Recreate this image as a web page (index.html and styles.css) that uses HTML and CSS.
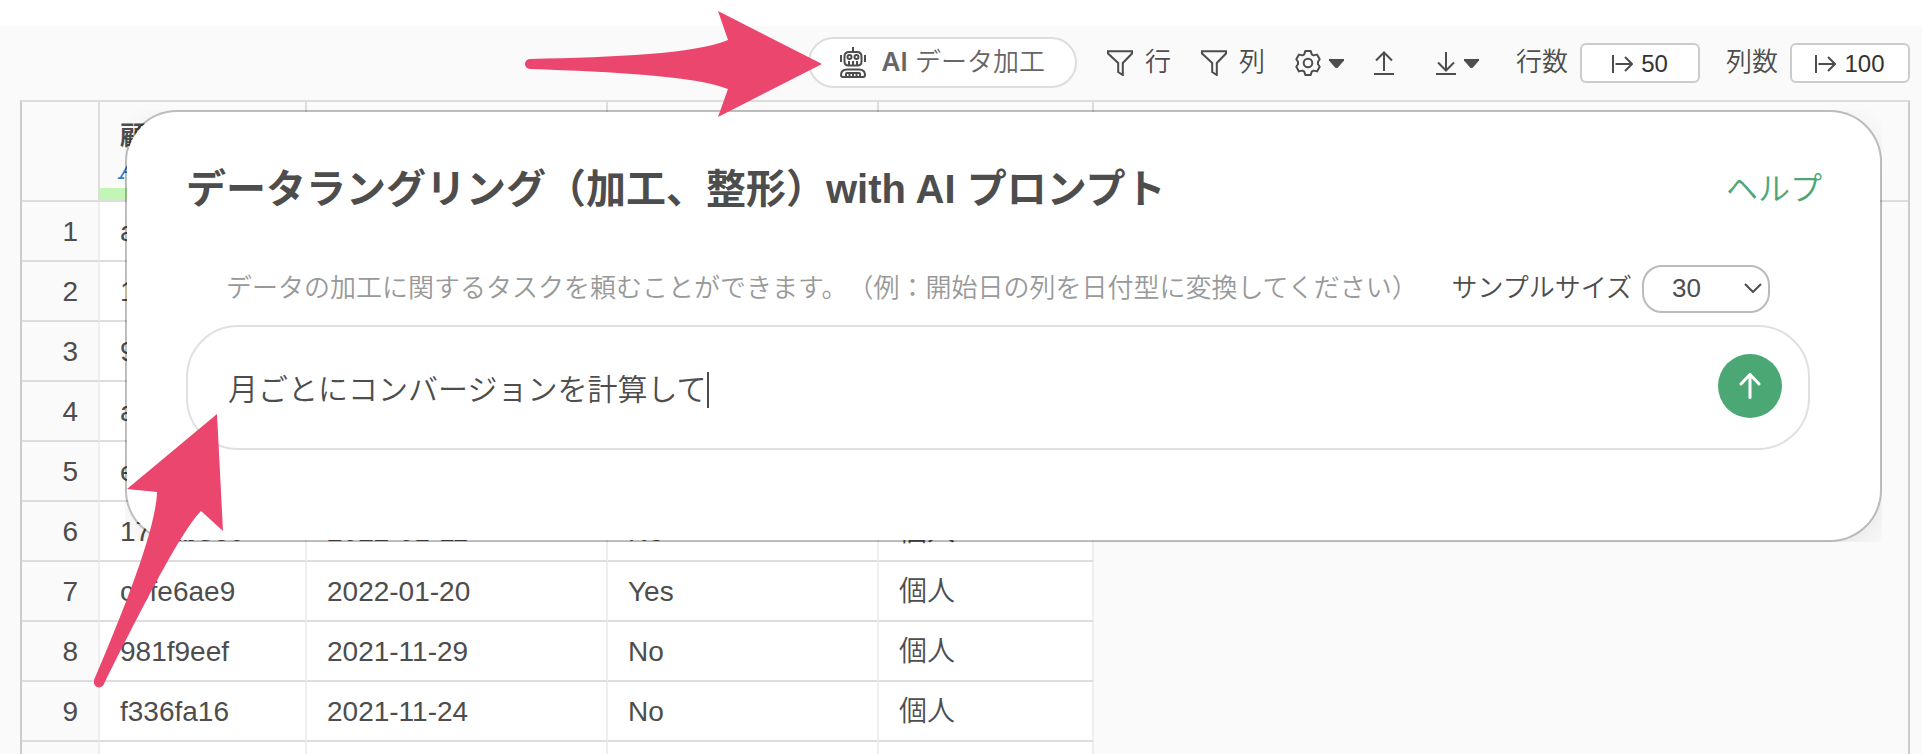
FILE: index.html
```html
<!DOCTYPE html>
<html lang="ja">
<head>
<meta charset="utf-8">
<title>データラングリング</title>
<link rel="stylesheet" href="styles.css">
</head>
<body>
<svg class="defs" width="0" height="0" aria-hidden="true">
  <symbol id="funnel" viewBox="0 0 26 26"><path d="M1 1.200h24v2.300L15.800 13v12l-4.600-3V13L1 3.500z"/></symbol>
  <symbol id="caret" viewBox="0 0 15 9"><path d="M0 0h15v1.500L8.500 9h-2L0 1.500z"/></symbol>
  <symbol id="span" viewBox="0 0 21 20"><path d="M1 1v18M3.500 10H20M13 3l7 7-7 7"/></symbol>
</svg>

<main class="app">
  <div class="toolbar">
    <button class="ai-button" type="button">
      <svg class="robot" viewBox="0 0 26 31" aria-hidden="true">
        <path d="M13 0v5M1 8v7M25 8v7M9 5h8q4.500 0 4.500 4.500v5q0 4-4 4h-9q-4 0-4-4v-5Q4.500 5 9 5zM9 18v-4M13 18v-4M17 18v-4"/>
        <circle cx="9.500" cy="10" r="2"/><circle cx="16.500" cy="10" r="2"/>
        <path d="M7 22.500h12q6 0 6 5.500 0 2-2 2H3q-2 0-2-2 0-5.500 6-5.500zM6 30v-3q0-1 1-1h12q1 0 1 1v3M9.500 26v4M13 26v4M16.500 26v4"/>
      </svg>
      <span><span class="ai-mark">AI</span> データ加工</span>
    </button>
    <button class="tool tool-filter" type="button"><svg class="icon-26" aria-hidden="true"><use href="#funnel"/></svg>行</button>
    <button class="tool tool-filter" type="button"><svg class="icon-26" aria-hidden="true"><use href="#funnel"/></svg>列</button>
    <button class="tool tool-menu" type="button" aria-label="設定">
      <svg class="icon-26" viewBox="0 0 26 26" aria-hidden="true"><path d="M10.300 1h5.400l1 3.300 1.900 1.100 3.400-.8 2.700 4.700-1.700 2.500v2.400l1.700 2.500-2.700 4.700-3.400-.8-1.900 1.100-1 3.300h-5.400l-1-3.300-1.900-1.100-3.400.8-2.700-4.700L3 14.200v-2.400L1.300 9.300 4 4.600l3.400.8 1.900-1.100z" stroke-linejoin="round"/><circle cx="13" cy="13" r="4.300"/></svg>
      <svg class="caret" aria-hidden="true"><use href="#caret"/></svg>
    </button>
    <button class="tool tool-upload" type="button" aria-label="アップロード">
      <svg class="icon-20" viewBox="0 0 20 24" aria-hidden="true"><path d="M10 20V1.500M2 9.500l8-8 8 8M0 23h20"/></svg>
    </button>
    <button class="tool tool-download" type="button" aria-label="ダウンロード">
      <svg class="icon-20" viewBox="0 0 20 24" aria-hidden="true"><path d="M10 1v18.500M2 11.500l8 8 8-8M0 23h20"/></svg>
      <svg class="caret" aria-hidden="true"><use href="#caret"/></svg>
    </button>
    <div class="limit limit-rows">
      <label for="rows">行数</label>
      <span class="limit-box"><svg class="span-icon" aria-hidden="true"><use href="#span"/></svg><input id="rows" value="50" size="2"></span>
    </div>
    <div class="limit">
      <label for="cols">列数</label>
      <span class="limit-box"><svg class="span-icon" aria-hidden="true"><use href="#span"/></svg><input id="cols" value="100" size="3"></span>
    </div>
  </div>

  <div class="panel">
    <table class="grid">
      <colgroup><col class="c-num"><col class="c-id"><col class="c-date"><col class="c-conv"><col class="c-type"><col></colgroup>
      <thead>
        <tr>
          <th></th>
          <th class="key"><div class="key-head"><span>顧</span><span class="type-text">A</span></div><div class="quality"></div></th>
          <th></th><th></th><th></th><th class="rest"></th>
        </tr>
      </thead>
      <tbody>
        <tr><th>1</th><td>a</td><td></td><td></td><td></td><td class="rest"></td></tr>
        <tr><th>2</th><td>1</td><td></td><td></td><td></td><td class="rest"></td></tr>
        <tr><th>3</th><td>9</td><td></td><td></td><td></td><td class="rest"></td></tr>
        <tr><th>4</th><td>a</td><td></td><td></td><td></td><td class="rest"></td></tr>
        <tr><th>5</th><td>e</td><td></td><td></td><td></td><td class="rest"></td></tr>
        <tr><th>6</th><td>1702b380</td><td>2022-01-11</td><td>No</td><td>個人</td><td class="rest"></td></tr>
        <tr><th>7</th><td>c5fe6ae9</td><td>2022-01-20</td><td>Yes</td><td>個人</td><td class="rest"></td></tr>
        <tr><th>8</th><td>981f9eef</td><td>2021-11-29</td><td>No</td><td>個人</td><td class="rest"></td></tr>
        <tr><th>9</th><td>f336fa16</td><td>2021-11-24</td><td>No</td><td>個人</td><td class="rest"></td></tr>
        <tr><th></th><td></td><td></td><td></td><td></td><td class="rest"></td></tr>
      </tbody>
    </table>
  </div>

  <div class="dialog-clip">
    <section class="dialog" role="dialog" aria-labelledby="dialog-title">
      <header class="dialog-head">
        <h1 id="dialog-title">データラングリング（加工、整形）with AI プロンプト</h1>
        <a class="help" href="#help">ヘルプ</a>
      </header>
      <form class="prompt">
        <div class="prompt-top">
          <label class="hint" for="prompt">データの加工に関するタスクを頼むことができます。（例：開始日の列を日付型に変換してください）</label>
          <div class="sample">
            <label for="sample">サンプルサイズ</label>
            <span class="select-wrap">
              <select id="sample"><option>30</option></select>
              <svg class="chevron" viewBox="0 0 18 10" aria-hidden="true"><path d="M1 1l8 8 8-8"/></svg>
            </span>
          </div>
        </div>
        <div class="prompt-box">
          <span class="entry"><input id="prompt" type="text" value="月ごとにコンバージョンを計算して"><span class="cursor"></span></span>
          <button class="send" type="button" aria-label="送信">
            <svg viewBox="0 0 22 26" aria-hidden="true"><path d="M11 24.500V2M2 11l9-9.500 9 9.500"/></svg>
          </button>
        </div>
      </form>
    </section>
  </div>

  <svg class="pointer pointer-button" viewBox="0 0 297 106" aria-hidden="true"><path d="M297 53L193 0l10 29C170 43 90 46 5 48a5 5 0 0 0 0 10c85 3 165 7 198 20l-10 28z"/></svg>
  <svg class="pointer pointer-prompt" viewBox="0 0 130 274" aria-hidden="true"><path d="M123 0L33 75l30 3C62 115 30 196 0 266a5 5 0 0 0 10 4C42 206 86 118 107 97l22 20z"/></svg>
</main>
</body>
</html>
```
FILE: styles.css
```css
* { box-sizing: border-box; }

body {
  margin: 0;
  height: 100vh;
  overflow: hidden;
  background: #fff;
  color: #4d4d4d;
  font: 350 26px/1.2 "Liberation Sans", "Noto Sans CJK JP", sans-serif;
  text-spacing-trim: space-all;
}

button, input, select { font: inherit; color: inherit; }
button { cursor: pointer; }
input { padding: 0; border: 0; outline: 0; background: none; field-sizing: content; }
svg { display: block; fill: none; stroke: #4d4d4d; stroke-width: 2; flex: none; }
.defs { position: absolute; }

.app {
  position: relative;
  height: 100vh;
  border-top: 26px solid #fff;
  background: #fafafa;
}

/* Toolbar */
.toolbar {
  display: flex;
  justify-content: flex-end;
  align-items: center;
  height: 74px;
  padding-right: 12px;
}
.ai-button {
  display: flex;
  align-items: center;
  gap: 16px;
  height: 51px;
  margin-bottom: 2px;
  padding: 0 30px;
  border: 2px solid #ddd;
  border-radius: 26px;
  background: #fff;
  color: #666;
  white-space: nowrap;
}
.ai-mark { font-family: Inter, sans-serif; font-weight: 600; }
.robot { width: 26px; height: 31px; }
.tool {
  display: flex;
  align-items: center;
  padding: 0;
  border: 0;
  background: none;
}
.tool-filter { gap: 12px; margin-left: 30px; }
.tool-menu { gap: 8px; margin-left: 30px; }
.tool-upload { margin-left: 30px; }
.tool-download { gap: 8px; margin-left: 42px; }
.icon-26 { width: 26px; height: 26px; }
.icon-20 { width: 20px; height: 24px; }
.caret { width: 15px; height: 9px; fill: #4d4d4d; stroke: none; }
.limit { display: flex; align-items: center; gap: 12px; margin-left: 26px; }
.limit-rows { margin-left: 37px; }
.limit-box {
  display: flex;
  align-items: center;
  justify-content: center;
  gap: 8px;
  width: 120px;
  height: 40px;
  padding-top: 2px;
  border: 2px solid #ccc;
  border-radius: 6px;
  background: #fff;
  color: #333;
  font-size: 24px;
}
.span-icon { width: 21px; height: 20px; }

/* Data grid */
.panel {
  margin: 0 12px 0 20px;
  border: 2px solid #ddd;
  border-color: #ddd #ccc;
}
.grid {
  width: 100%;
  table-layout: fixed;
  border-spacing: 0;
  font-size: 28px;
  line-height: 32px;
}
.c-num { width: 78px; }
.c-id { width: 207px; }
.c-date { width: 301px; }
.c-conv { width: 271px; }
.c-type { width: 215px; }
.grid th, .grid td {
  height: 60px;
  padding: 2px 20px 0;
  border-right: 2px solid #eee;
  border-bottom: 2px solid #ddd;
  background: #fff;
  text-align: left;
  white-space: nowrap;
}
.grid th { background: #fafafa; font-weight: 350; }
.grid tbody th { text-align: right; }
.grid thead th { height: 100px; border-right-color: #ddd; }
.grid .rest { border-right: 0; background: #fafafa; }
.grid tbody .rest { border-bottom: 0; }
.grid thead .key { padding: 0; }
.key-head {
  display: flex;
  flex-direction: column;
  height: 86px;
  padding: 18px 20px 0;
  font-size: 26px;
  font-weight: 700;
}
.type-text { color: #2f7fc9; font: italic 700 28px/36px "DejaVu Serif", serif; }
.quality { height: 12px; background: #c3f5b5; }

/* Dialog over the grid */
.dialog-clip {
  position: absolute;
  top: 84px;
  left: 125px;
  right: 40px;
  overflow: hidden;
}
.dialog {
  padding: 53px 58px 90px 59px;
  border: 2px solid rgba(0, 0, 0, .24);
  border-radius: 52px;
  background: #fff;
  background-clip: padding-box;
  box-shadow: 0 10px 30px rgba(0, 0, 0, .08);
}
.dialog-head { display: flex; justify-content: space-between; align-items: center; }
h1 { margin: 0; font-size: 40px; font-weight: 700; line-height: 48px; white-space: nowrap; }
.help { color: #4ba874; font-size: 32px; line-height: 48px; text-decoration: none; }
.prompt { margin: 52px 12px 0 0; }
.prompt-top {
  display: flex;
  justify-content: space-between;
  align-items: center;
  padding: 0 40px;
  white-space: nowrap;
}
.hint { color: #999; }
.sample { display: flex; align-items: center; gap: 10px; }
.select-wrap { position: relative; }
.sample select {
  display: block;
  width: 128px;
  height: 48px;
  padding: 0 28px;
  border: 2px solid #bbb;
  border-radius: 20px;
  background: #fff;
  appearance: none;
}
.chevron { position: absolute; top: 18px; right: 8px; width: 18px; height: 10px; pointer-events: none; }
.prompt-box {
  display: flex;
  justify-content: space-between;
  align-items: center;
  height: 125px;
  margin-top: 12px;
  padding: 0 26px 4px 40px;
  border: 2px solid #e0e0e0;
  border-radius: 52px;
}
.entry { display: flex; align-items: center; padding-top: 8px; font-size: 30px; }
.entry input { caret-color: transparent; }
.cursor { width: 2px; height: 36px; background: #4d4d4d; }
.send {
  display: grid;
  place-items: center;
  width: 64px;
  height: 64px;
  padding: 0;
  border: 0;
  border-radius: 50%;
  background: #4ba874;
}
.send svg { width: 22px; height: 26px; stroke: #fff; stroke-width: 3; stroke-linecap: round; }

/* Callout arrows */
.pointer { position: absolute; fill: #eb466e; stroke: none; }
.pointer-button { top: -15px; left: 525px; width: 297px; height: 106px; }
.pointer-prompt { top: 388px; left: 94px; width: 130px; height: 274px; }
```
